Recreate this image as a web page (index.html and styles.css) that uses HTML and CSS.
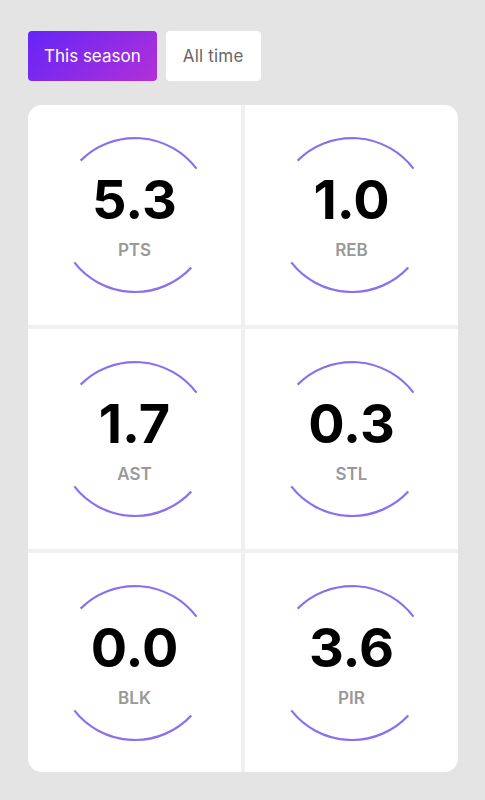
FILE: index.html
```html
<!DOCTYPE html>
<html>
    <head>
        <meta charset="UTF-8">
        <title>Player stats</title>
        <link rel="stylesheet" href="styles.css">
    </head>
    <body>
        <main class="page">
            <nav class="tabs">
                <button class="tab tab-active">This season</button>
                <button class="tab">All time</button>
            </nav>
            <section class="stats">
                <div class="stat">
                    <svg class="ring" viewBox="0 0 160 160"><path d="M25.6 25.6 A77 77 0 0 1 141.5 33.7 M136.3 132.5 A77 77 0 0 1 19.3 127.4"/></svg>
                    <span class="value">5.3</span>
                    <span class="label">PTS</span>
                </div>
                <div class="stat">
                    <svg class="ring" viewBox="0 0 160 160"><path d="M25.6 25.6 A77 77 0 0 1 141.5 33.7 M136.3 132.5 A77 77 0 0 1 19.3 127.4"/></svg>
                    <span class="value">1.0</span>
                    <span class="label">REB</span>
                </div>
                <div class="stat">
                    <svg class="ring" viewBox="0 0 160 160"><path d="M25.6 25.6 A77 77 0 0 1 141.5 33.7 M136.3 132.5 A77 77 0 0 1 19.3 127.4"/></svg>
                    <span class="value">1.7</span>
                    <span class="label">AST</span>
                </div>
                <div class="stat">
                    <svg class="ring" viewBox="0 0 160 160"><path d="M25.6 25.6 A77 77 0 0 1 141.5 33.7 M136.3 132.5 A77 77 0 0 1 19.3 127.4"/></svg>
                    <span class="value">0.3</span>
                    <span class="label">STL</span>
                </div>
                <div class="stat">
                    <svg class="ring" viewBox="0 0 160 160"><path d="M25.6 25.6 A77 77 0 0 1 141.5 33.7 M136.3 132.5 A77 77 0 0 1 19.3 127.4"/></svg>
                    <span class="value">0.0</span>
                    <span class="label">BLK</span>
                </div>
                <div class="stat">
                    <svg class="ring" viewBox="0 0 160 160"><path d="M25.6 25.6 A77 77 0 0 1 141.5 33.7 M136.3 132.5 A77 77 0 0 1 19.3 127.4"/></svg>
                    <span class="value">3.6</span>
                    <span class="label">PIR</span>
                </div>
            </section>
        </main>
    </body>
</html>
```
FILE: styles.css
```css
:root {
    --page-background-color: #e4e4e4;
    --card-background-color: #fff;
    --divider-color: #f0f0f0;
    --ring-color: #8b6ff0;
    --label-color: #999;
}

body {
    margin: 0;
    background-color: var(--page-background-color);
    font-family: Inter, "Noto Sans", sans-serif;
}

.page {
    padding: 31px 27px 28px 28px;
}

.tabs {
    display: flex;
    gap: 9px;
    margin-bottom: 24px;
}

.tab {
    height: 50px;
    padding: 0 17px;
    border: none;
    border-radius: 4px;
    background-color: #fff;
    color: #666;
    font-family: inherit;
    font-size: 17px;
    letter-spacing: 0.2px;
}

.tab-active {
    padding: 0 16px;
    letter-spacing: 0;
    background: linear-gradient(135deg, #6425f7, #b330d8);
    color: #fff;
}

.stats {
    display: grid;
    grid-template-columns: 1fr 1fr;
    grid-auto-rows: 220px;
    gap: 4px;
    width: 430px;
    height: 667px;
    background-color: var(--divider-color);
    border-radius: 14px;
    overflow: hidden;
}

.stat {
    position: relative;
    display: flex;
    flex-direction: column;
    align-items: center;
    justify-content: center;
    background-color: var(--card-background-color);
}

.ring {
    position: absolute;
    top: 50%;
    left: 50%;
    width: 160px;
    height: 160px;
    margin: -80px 0 0 -80px;
    fill: none;
    stroke: var(--ring-color);
    stroke-width: 2.2;
}

.value {
    font-size: 54px;
    font-weight: 700;
    line-height: 1;
    color: #000;
    margin-top: 2px;
}

.label {
    margin-top: 13px;
    font-size: 17px;
    font-weight: 600;
    color: var(--label-color);
}
```
